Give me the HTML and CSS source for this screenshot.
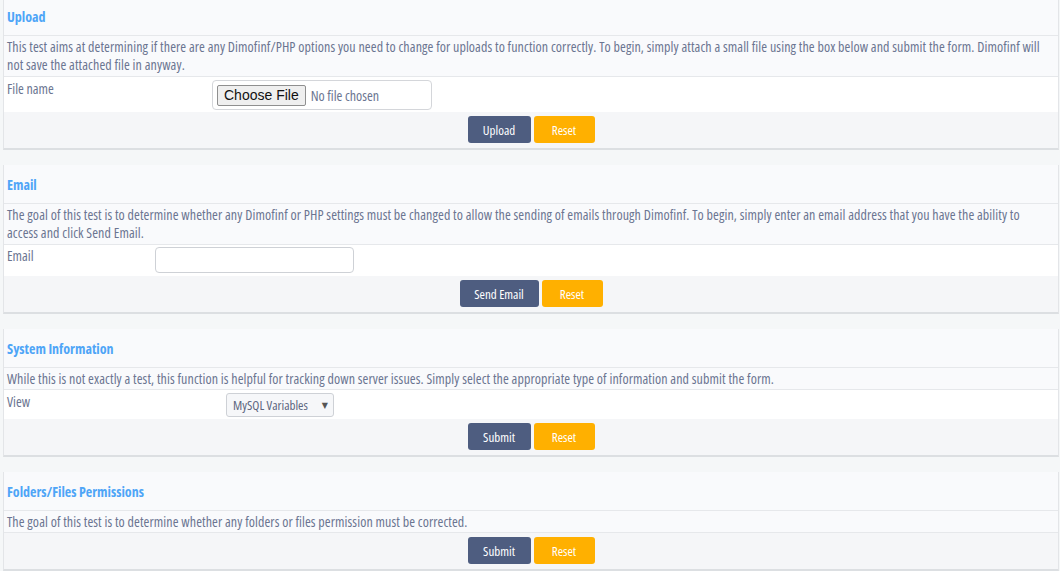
FILE: index.html
```html
<!DOCTYPE html>
<html>
<head>
<meta charset="utf-8">
<link rel="stylesheet" href="styles.css">
</head>
<body>
<div class="page">
  <section class="panel">
    <div class="panel-head">Upload</div>
    <div class="panel-desc panel-desc--upload">This test aims at determining if there are any Dimofinf/PHP options you need to change for uploads to function correctly. To begin, simply attach a small file using the box below and submit the form. Dimofinf will not save the attached file in anyway.</div>
    <div class="field-row field-row--upload">
      <div class="field-label">File name</div>
      <div class="file-box"><span class="file-btn">Choose File</span><span class="file-none">No file chosen</span></div>
    </div>
    <div class="btn-row">
      <span class="btn btn-primary btn-w63">Upload</span><span class="btn btn-warn btn-w61">Reset</span>
    </div>
  </section>

  <section class="panel">
    <div class="panel-head">Email</div>
    <div class="panel-desc panel-desc--email">The goal of this test is to determine whether any Dimofinf or PHP settings must be changed to allow the sending of emails through Dimofinf. To begin, simply enter an email address that you have the ability to access and click Send Email.</div>
    <div class="field-row field-row--email">
      <div class="field-label">Email</div>
      <div class="text-input"></div>
    </div>
    <div class="btn-row">
      <span class="btn btn-primary btn-w79">Send Email</span><span class="btn btn-warn btn-w61">Reset</span>
    </div>
  </section>

  <section class="panel">
    <div class="panel-head">System Information</div>
    <div class="panel-desc panel-desc--single">While this is not exactly a test, this function is helpful for tracking down server issues. Simply select the appropriate type of information and submit the form.</div>
    <div class="field-row field-row--view">
      <div class="field-label">View</div>
      <div class="select-box"><span class="select-text">MySQL Variables</span><span class="caret">&#9660;</span></div>
    </div>
    <div class="btn-row">
      <span class="btn btn-primary btn-w63">Submit</span><span class="btn btn-warn btn-w61">Reset</span>
    </div>
  </section>

  <section class="panel panel--last">
    <div class="panel-head">Folders/Files Permissions</div>
    <div class="panel-desc panel-desc--single">The goal of this test is to determine whether any folders or files permission must be corrected.</div>
    <div class="btn-row">
      <span class="btn btn-primary btn-w63">Submit</span><span class="btn btn-warn btn-w61">Reset</span>
    </div>
  </section>
</div>
</body>
</html>
```

FILE: styles.css
```css
html, body {
  margin: 0;
  padding: 0;
  background: #f5f7f8;
}
body {
  font-family: "Open Sans", sans-serif;
  font-stretch: 78%;
  font-size: 14px;
  color: #6b7591;
}
.page {
  padding: 0 1px 0 3px;
  margin-top: -3px;
}
.panel {
  background: #f9fafc;
  border: 1px solid #e3e5e8;
  border-top: none;
  border-bottom: 2px solid #dcdfe2;
  margin-bottom: 15px;
}
.panel-head {
  height: 38px;
  display: flex;
  align-items: center;
  padding: 0 3px;
  border-bottom: 1px solid #e6e8eb;
  font-weight: bold;
  color: #4ea5f7;
  font-size: 14px;
}
.panel-desc {
  padding: 2px 3px;
  line-height: 18px;
  letter-spacing: 0.1px;
  border-bottom: 1px solid #e6e8eb;
}
.panel-desc--upload {
  padding-right: 14px;
}
.panel-desc--email {
  padding-right: 30px;
}
.panel-desc--single {
  padding-bottom: 1px;
}
.field-row {
  background: #fff;
  display: grid;
  align-items: start;
  padding: 3px 3px 2px;
}
.field-row--upload { grid-template-columns: 205px auto; }
.field-row--email { grid-template-columns: 148px auto; padding: 2px 3px 3px; }
.field-row--view { grid-template-columns: 219px auto; padding: 3px 3px 2px; }
.field-label {
  line-height: 16px;
  padding-top: 1px;
}
.file-box {
  width: 214px;
  height: 28px;
  border: 1px solid #d4d6da;
  border-radius: 4px;
  display: flex;
  align-items: center;
  padding-left: 4px;
  background: #fff;
}
.file-btn {
  font-family: "Liberation Sans", Arial, sans-serif;
  font-stretch: normal;
  font-size: 14px;
  color: #111;
  background: #efefef;
  border: 1px solid #8f8f8f;
  border-radius: 2px;
  padding: 1px 6px;
  line-height: 17px;
}
.file-none {
  margin-left: 5px;
  color: #6b7591;
}
.text-input {
  width: 197px;
  height: 24px;
  border: 1px solid #ced1d6;
  border-radius: 4px;
  background: #fff;
}
.select-box {
  box-sizing: border-box;
  width: 108px;
  height: 24px;
  border: 1px solid #ced1d6;
  border-radius: 3px;
  background: #f6f7f9;
  display: flex;
  align-items: center;
  justify-content: space-between;
  padding: 0 5px 0 6px;
  color: #5d6680;
}
.select-text {
  font-size: 13px;
  white-space: nowrap;
}
.caret {
  font-family: "DejaVu Sans", sans-serif;
  font-stretch: normal;
  font-size: 8px;
  color: #555;
}
.btn-row {
  background: #f5f6f8;
  display: flex;
  justify-content: center;
  gap: 3px;
  padding: 4px 0 5px;
}
.btn {
  height: 27px;
  border-radius: 3px;
  display: flex;
  align-items: center;
  justify-content: center;
  color: #fff;
  font-size: 13px;
}
.btn-primary { background: #4e5d80; }
.btn-warn { background: #ffb000; }
.btn-w63 { width: 63px; }
.btn-w61 { width: 61px; }
.btn-w79 { width: 79px; }
```
